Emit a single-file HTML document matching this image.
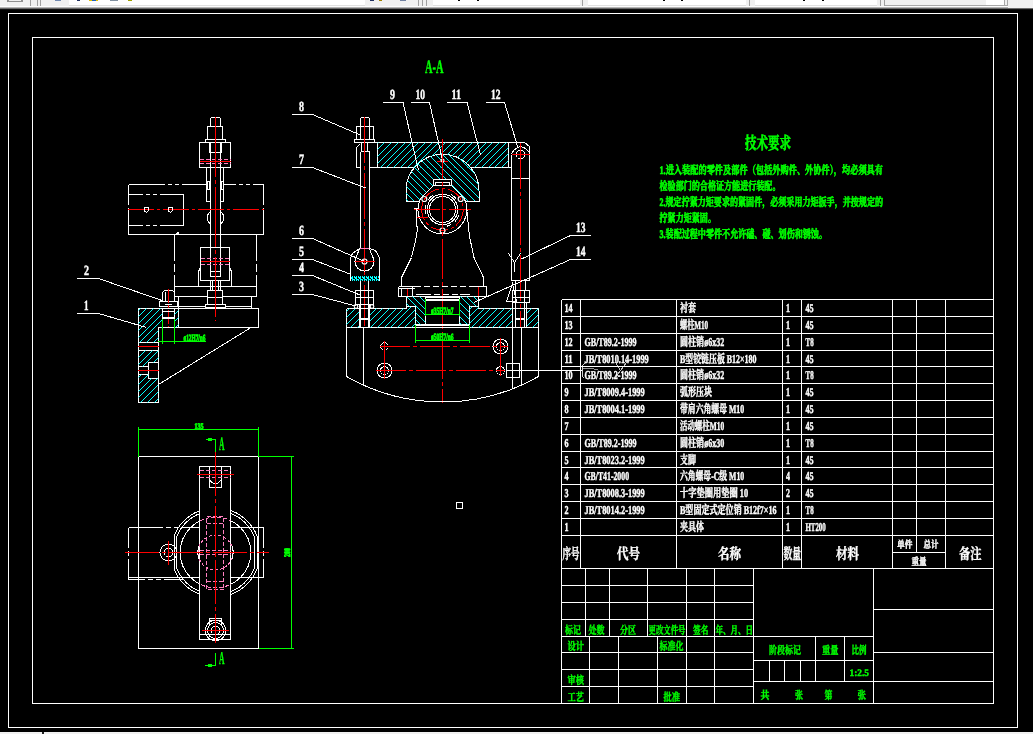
<!DOCTYPE html>
<html lang="zh">
<head>
<meta charset="utf-8">
<title>夹具装配图</title>
<style>
html,body{margin:0;padding:0;background:#000;overflow:hidden}
svg{display:block;position:absolute;left:0;top:0}
text{font-family:"Liberation Serif", "Noto Serif CJK SC", serif;white-space:pre;stroke-width:.45px;text-rendering:geometricPrecision}
</style>
</head>
<body>
<svg width="1033" height="734" viewBox="0 0 1033 734">
<rect x="0" y="0" width="1033" height="734" fill="#000"/>
<g shape-rendering="crispEdges" stroke="none">
<rect x="0" y="0" width="1033" height="8" fill="#f0f0f0"/>
<rect x="0" y="6" width="1008" height="1" fill="#fcfcfc"/>
<rect x="0" y="7" width="1008" height="1" fill="#b4b4b4"/>
<rect x="0" y="8" width="1033" height="1" fill="#6a6a6a"/>
<rect x="0" y="9" width="1033" height="1" fill="#101010"/>
<rect x="69" y="0" width="296" height="5" fill="#fff"/>
<rect x="69" y="5" width="296" height="1" fill="#e0e0e0"/>
<rect x="433" y="0" width="147" height="5" fill="#fff"/>
<rect x="433" y="5" width="147" height="1" fill="#e0e0e0"/>
<rect x="588" y="0" width="158" height="5" fill="#fff"/>
<rect x="588" y="5" width="158" height="1" fill="#e0e0e0"/>
<rect x="755" y="0" width="122" height="5" fill="#fff"/>
<rect x="755" y="5" width="122" height="1" fill="#e0e0e0"/>
<rect x="886" y="0" width="118" height="5" fill="#f0f0f0"/>
<rect x="986" y="0" width="18" height="5" fill="#fff"/>
<rect x="884" y="5" width="124" height="1" fill="#a8a8a8"/>
<rect x="1004" y="0" width="1" height="6" fill="#a8a8a8"/>
<rect x="1007" y="0" width="1" height="6" fill="#a8a8a8"/>
<rect x="30" y="0" width="1" height="6" fill="#a0a0a0"/>
<rect x="37" y="0" width="1" height="6" fill="#a0a0a0"/>
<rect x="40" y="0" width="1" height="6" fill="#a0a0a0"/>
<rect x="418" y="0" width="1" height="6" fill="#a0a0a0"/>
<rect x="422" y="0" width="1" height="6" fill="#a0a0a0"/>
<rect x="426" y="0" width="1" height="6" fill="#a0a0a0"/>
<rect x="582" y="0" width="1" height="6" fill="#a0a0a0"/>
<rect x="749" y="0" width="1" height="6" fill="#a0a0a0"/>
<rect x="880" y="0" width="1" height="6" fill="#a0a0a0"/>
<rect x="884" y="0" width="1" height="6" fill="#a0a0a0"/>
<rect x="7" y="0" width="16" height="2" fill="#909090"/>
<rect x="9" y="0" width="12" height="1" fill="#f0f0f0"/>
<rect x="55" y="0" width="6" height="1" fill="#7088b0"/>
<rect x="77" y="0" width="3" height="1" fill="#203060"/>
<rect x="89" y="0" width="9" height="1" fill="#e0c000"/>
<rect x="92" y="0" width="4" height="1" fill="#2060c0"/>
<rect x="110" y="0" width="8" height="1" fill="#8090a0"/>
<rect x="128" y="0" width="4" height="1" fill="#a0a000"/>
<rect x="370" y="0" width="4" height="1" fill="#203060"/>
<rect x="379" y="0" width="3" height="1" fill="#a08000"/>
<rect x="400" y="0" width="6" height="1" fill="#7080a0"/>
<rect x="458" y="0" width="2" height="1" fill="#000"/>
<rect x="477" y="0" width="2" height="1" fill="#000"/>
<rect x="663" y="0" width="2" height="1" fill="#000"/>
<rect x="681" y="0" width="2" height="1" fill="#000"/>
<rect x="803" y="0" width="2" height="1" fill="#000"/>
<rect x="822" y="0" width="2" height="1" fill="#000"/>
<rect x="0" y="732" width="1033" height="2" fill="#f0f0f0"/>
<rect x="42" y="732" width="2" height="2" fill="#202020"/>
</g>
<defs>
<clipPath id="c1"><path clip-rule="evenodd" d="M138.5,308.5H178.5V327.5H158.5V402.5H138.5Z M162.5,308.5V327.5H174.5V308.5Z M138.5,342.5H158.5V350.5H138.5Z M138.5,366.5H148.5V362.5H158.5V378.5H148.5V374.5H138.5Z"/></clipPath>
<clipPath id="c2"><rect x="100" y="480" width="99.5" height="150"/><rect x="230.5" y="480" width="80" height="150"/></clipPath>
<clipPath id="c3"><rect x="199.5" y="480" width="31" height="150"/></clipPath>
<clipPath id="c4"><path clip-rule="evenodd" d="M377.5,142.5H508.5V167.5H377.5Z M406,190.8 a36.5,36.5 0 1 0 73,0 a36.5,36.5 0 1 0 -73,0Z"/></clipPath>
<clipPath id="c5"><path d="M406,201.5V190.8 A36.5,36.5 0 0 1 479,190.8V201.5Z"/></clipPath>
<clipPath id="c6"><path clip-rule="evenodd" d="M380,130H510V260H380Z M433.5,185.5 L420.7,198.5 A24.4,24.4 0 1 0 464.3,198.5 L451.5,185.5 V179.5 H433.5 Z"/></clipPath>
<clipPath id="c7"><path d="M406.5,296.5H425.5V324.5H415.5V306.5H406.5Z M478.5,296.5H459.5V324.5H469.5V306.5H478.5Z"/></clipPath>
<clipPath id="c8"><path clip-rule="evenodd" d="M346.5,308.5H406.5V306.5H415.5V327.5H346.5Z M359.5,308.5H369.5V327.5H359.5Z M469.5,306.5H478.5V308.5H538.5V327.5H469.5Z M512.5,308.5H526.5V327.5H512.5Z"/></clipPath>
<clipPath id="c9"><rect x="350" y="256" width="30" height="20"/></clipPath>
</defs>
<g shape-rendering="crispEdges" stroke-width="1" fill="none">
<rect x="8.5" y="13.5" width="1009" height="714" stroke="#fff" fill="none"/>
<rect x="32.5" y="37.5" width="961" height="666" stroke="#fff" fill="none"/>
<path d="M210.5,126.5 V118.5 L211.5,117.5 H219.5 L220.5,118.5 V126.5" stroke="#fff" fill="none"/>
<rect x="207.5" y="126.5" width="15" height="13" stroke="#fff" fill="none"/>
<rect x="205.5" y="139.5" width="20" height="3" stroke="#fff" fill="none"/>
<rect x="199.5" y="142.5" width="31" height="25" stroke="#fff" fill="none"/>
<line x1="209.5" y1="142.5" x2="209.5" y2="152.5" stroke="#fff"/>
<line x1="210.5" y1="142.5" x2="210.5" y2="152.5" stroke="#fff"/>
<line x1="220.5" y1="142.5" x2="220.5" y2="152.5" stroke="#fff"/>
<line x1="221.5" y1="142.5" x2="221.5" y2="152.5" stroke="#fff"/>
<line x1="210.5" y1="152.5" x2="220.5" y2="152.5" stroke="#fff"/>
<line x1="210.5" y1="152.5" x2="210.5" y2="276.5" stroke="#fff"/>
<line x1="220.5" y1="152.5" x2="220.5" y2="276.5" stroke="#fff"/>
<line x1="199.5" y1="159.5" x2="231" y2="159.5" stroke="#ff80c0" stroke-dasharray="4 2"/>
<line x1="199.5" y1="163.5" x2="231" y2="163.5" stroke="#ff80c0" stroke-dasharray="4 2"/>
<line x1="199.5" y1="161.5" x2="231" y2="161.5" stroke="#f00"/>
<line x1="206.5" y1="167.5" x2="206.5" y2="201.5" stroke="#fff"/>
<line x1="223.5" y1="167.5" x2="223.5" y2="201.5" stroke="#fff"/>
<line x1="206.5" y1="201.5" x2="210.5" y2="201.5" stroke="#fff"/>
<line x1="220.5" y1="201.5" x2="223.5" y2="201.5" stroke="#fff"/>
<rect x="207.5" y="181.5" width="2" height="8" stroke="#fff" fill="none"/>
<rect x="221.5" y="181.5" width="2" height="8" stroke="#fff" fill="none"/>
<line x1="128.5" y1="184.5" x2="206.5" y2="184.5" stroke="#fff" stroke-dasharray="36 3 4 3 4 3 100"/>
<line x1="223.5" y1="184.5" x2="263.5" y2="184.5" stroke="#fff" stroke-dasharray="12 3 4 3 4 3 100"/>
<line x1="128.5" y1="234.5" x2="263.5" y2="234.5" stroke="#fff"/>
<line x1="128.5" y1="184.5" x2="128.5" y2="234.5" stroke="#fff" stroke-dasharray="20 3 100"/>
<line x1="263.5" y1="184.5" x2="263.5" y2="234.5" stroke="#fff" stroke-dasharray="20 3 100"/>
<line x1="128.5" y1="194.5" x2="183.5" y2="194.5" stroke="#fff" stroke-dasharray="14 3 4 3 4 3 100"/>
<line x1="128.5" y1="225.5" x2="183.5" y2="225.5" stroke="#fff" stroke-dasharray="14 3 4 3 4 3 100"/>
<line x1="183.5" y1="194.5" x2="183.5" y2="225.5" stroke="#fff"/>
<line x1="128" y1="209.5" x2="264" y2="209.5" stroke="#f00" stroke-dasharray="26 3 3 3"/>
<polygon points="144,207.5 148.5,207.5 148.5,210.5 146.5,212.5 144,210.5" stroke="#fff" fill="none"/>
<polygon points="168,207.5 172.5,207.5 172.5,210.5 170.5,212.5 168,210.5" stroke="#fff" fill="none"/>
<path d="M210.5,211.5 Q203.5,217.5 210.5,224.5" stroke="#fff" fill="none"/>
<path d="M220.5,211.5 Q227.5,217.5 220.5,224.5" stroke="#fff" fill="none"/>
<line x1="174.5" y1="234.5" x2="174.5" y2="286.5" stroke="#fff" stroke-dasharray="26 3 8 3 100"/>
<line x1="256.5" y1="234.5" x2="256.5" y2="296.5" stroke="#fff" stroke-dasharray="26 3 8 3 100"/>
<polyline points="176.5,234.5 178,232 179.5,234.5" stroke="#fff" fill="none"/>
<rect x="200.5" y="247.5" width="29" height="33" stroke="#fff" fill="none"/>
<line x1="200.5" y1="258.5" x2="230" y2="258.5" stroke="#ff80c0" stroke-dasharray="4 2"/>
<line x1="200.5" y1="264.5" x2="230" y2="264.5" stroke="#ff80c0" stroke-dasharray="4 2"/>
<line x1="200.5" y1="261.5" x2="230" y2="261.5" stroke="#f00"/>
<line x1="210.5" y1="271.5" x2="220.5" y2="271.5" stroke="#fff"/>
<line x1="210.5" y1="276.5" x2="220.5" y2="276.5" stroke="#fff"/>
<polyline points="200.5,267.5 198.5,271.5 198.5,285.5" stroke="#fff" fill="none"/>
<polyline points="229.5,267.5 231.5,271.5 231.5,285.5" stroke="#fff" fill="none"/>
<rect x="174.5" y="286.5" width="82" height="10" stroke="#fff" fill="none"/>
<line x1="210.5" y1="280.5" x2="210.5" y2="290.5" stroke="#fff"/>
<line x1="220.5" y1="280.5" x2="220.5" y2="290.5" stroke="#fff"/>
<line x1="212.5" y1="280.5" x2="212.5" y2="290.5" stroke="#fff"/>
<line x1="218.5" y1="280.5" x2="218.5" y2="290.5" stroke="#fff"/>
<rect x="207.5" y="290.5" width="15" height="14" stroke="#fff" fill="#000"/>
<line x1="207.5" y1="297.5" x2="222.5" y2="297.5" stroke="#fff"/>
<rect x="205.5" y="304.5" width="20" height="3" stroke="#fff" fill="#000"/>
<line x1="178.5" y1="296.5" x2="178.5" y2="308.5" stroke="#fff"/>
<line x1="251.5" y1="296.5" x2="251.5" y2="308.5" stroke="#fff"/>
<line x1="178.5" y1="306.5" x2="205.5" y2="306.5" stroke="#fff"/>
<line x1="225.5" y1="306.5" x2="251.5" y2="306.5" stroke="#fff"/>
<line x1="138.5" y1="308.5" x2="258.5" y2="308.5" stroke="#fff"/>
<line x1="258.5" y1="308.5" x2="258.5" y2="327.5" stroke="#fff"/>
<line x1="158.5" y1="327.5" x2="258.5" y2="327.5" stroke="#fff"/>
<line x1="215.5" y1="117" x2="215.5" y2="321" stroke="#f00" stroke-dasharray="60 3 4 3"/>
<path d="M162.5,301.5 V293.5 Q162.5,290.5 165.5,290.5 H171.5 Q174.5,290.5 174.5,293.5 V301.5" stroke="#fff" fill="none"/>
<line x1="165.5" y1="291.5" x2="165.5" y2="301.5" stroke="#fff"/>
<rect x="159.5" y="301.5" width="18" height="5" stroke="#fff" fill="none"/>
<line x1="165" y1="304.5" x2="172" y2="304.5" stroke="#fff"/>
<line x1="168.5" y1="289" x2="168.5" y2="327" stroke="#f00" stroke-dasharray="14 2 3 2"/>
<polygon points="138.5,308.5 178.5,308.5 178.5,327.5 158.5,327.5 158.5,402.5 138.5,402.5" stroke="#fff" fill="none"/>
<line x1="162.5" y1="308.5" x2="162.5" y2="327.5" stroke="#fff"/>
<line x1="174.5" y1="308.5" x2="174.5" y2="327.5" stroke="#fff"/>
<line x1="162.5" y1="317.5" x2="174.5" y2="317.5" stroke="#fff"/>
<line x1="162.5" y1="318.5" x2="174.5" y2="318.5" stroke="#fff"/>
<line x1="162.5" y1="311.5" x2="174.5" y2="311.5" stroke="#fff"/>
<line x1="138.5" y1="342.5" x2="158.5" y2="342.5" stroke="#fff"/>
<line x1="138.5" y1="350.5" x2="158.5" y2="350.5" stroke="#fff"/>
<line x1="138" y1="346.5" x2="159" y2="346.5" stroke="#f00"/>
<line x1="138.5" y1="366.5" x2="148.5" y2="366.5" stroke="#fff"/>
<line x1="138.5" y1="374.5" x2="148.5" y2="374.5" stroke="#fff"/>
<rect x="148.5" y="362.5" width="10" height="16" stroke="#fff" fill="none"/>
<line x1="138" y1="370.5" x2="159" y2="370.5" stroke="#f00"/>
<path clip-path="url(#c1)" d="M38.5,403.5 L133.5,308.5 M45.5,403.5 L140.5,308.5 M51.5,403.5 L146.5,308.5 M58.5,403.5 L153.5,308.5 M65.5,403.5 L160.5,308.5 M72.5,403.5 L167.5,308.5 M78.5,403.5 L173.5,308.5 M85.5,403.5 L180.5,308.5 M92.5,403.5 L187.5,308.5 M99.5,403.5 L194.5,308.5 M105.5,403.5 L200.5,308.5 M112.5,403.5 L207.5,308.5 M119.5,403.5 L214.5,308.5 M126.5,403.5 L221.5,308.5 M132.5,403.5 L227.5,308.5 M139.5,403.5 L234.5,308.5 M146.5,403.5 L241.5,308.5 M153.5,403.5 L248.5,308.5 M159.5,403.5 L254.5,308.5 M166.5,403.5 L261.5,308.5 M173.5,403.5 L268.5,308.5 M180.5,403.5 L275.5,308.5 M186.5,403.5 L281.5,308.5 M193.5,403.5 L288.5,308.5 M200.5,403.5 L295.5,308.5 M207.5,403.5 L302.5,308.5 M213.5,403.5 L308.5,308.5 M220.5,403.5 L315.5,308.5 M227.5,403.5 L322.5,308.5 M234.5,403.5 L329.5,308.5 M240.5,403.5 L335.5,308.5 M247.5,403.5 L342.5,308.5 M254.5,403.5 L349.5,308.5 M261.5,403.5 L356.5,308.5 M267.5,403.5 L362.5,308.5 M274.5,403.5 L369.5,308.5" stroke="#0ff" fill="none"/>
<line x1="251" y1="327.5" x2="158.5" y2="384.5" stroke="#fff"/>
<line x1="162.5" y1="318.5" x2="162.5" y2="343.5" stroke="#0f0"/>
<line x1="174.5" y1="318.5" x2="174.5" y2="343.5" stroke="#0f0"/>
<line x1="158" y1="341.5" x2="206" y2="341.5" stroke="#0f0"/>
<polyline points="77,278.5 98.5,278.5 162,300.5" stroke="#fff" fill="none"/>
<polyline points="77,313.5 98.5,313.5 146.5,327.5" stroke="#fff" fill="none"/>
<rect x="138.5" y="456.5" width="120" height="192" stroke="#fff" fill="none"/>
<line x1="138.5" y1="429.5" x2="258.5" y2="429.5" stroke="#0f0"/>
<line x1="138.5" y1="427" x2="138.5" y2="456.5" stroke="#0f0"/>
<line x1="258.5" y1="427" x2="258.5" y2="456.5" stroke="#0f0"/>
<line x1="258.5" y1="456.5" x2="294" y2="456.5" stroke="#0f0"/>
<line x1="258.5" y1="648.5" x2="294" y2="648.5" stroke="#0f0"/>
<line x1="291.5" y1="456.5" x2="291.5" y2="648.5" stroke="#0f0"/>
<line x1="215.5" y1="439.5" x2="215.5" y2="452" stroke="#0f0"/>
<line x1="205.5" y1="439.5" x2="215.5" y2="439.5" stroke="#0f0"/>
<rect x="208" y="438" width="4" height="3" fill="#0f0" stroke="none"/>
<line x1="215.5" y1="653" x2="215.5" y2="665.5" stroke="#0f0"/>
<line x1="205" y1="665.5" x2="215.5" y2="665.5" stroke="#0f0"/>
<rect x="208" y="664" width="4" height="3" fill="#0f0" stroke="none"/>
<rect x="199.5" y="466.5" width="31" height="173" stroke="#fff" fill="none"/>
<line x1="199.5" y1="634.5" x2="230.5" y2="634.5" stroke="#fff"/>
<path d="M209.5,466.5 V487.5 H221.5 V466.5" stroke="#fff" fill="none"/>
<path d="M209.5,477.5 A6,6 0 0 0 221.5,477.5" stroke="#fff" fill="none"/>
<line x1="199.5" y1="470.5" x2="231" y2="470.5" stroke="#ff80c0" stroke-dasharray="4 2"/>
<line x1="199.5" y1="477.5" x2="231" y2="477.5" stroke="#ff80c0" stroke-dasharray="4 2"/>
<line x1="197" y1="474.5" x2="234" y2="474.5" stroke="#f00"/>
<line x1="128.5" y1="527.5" x2="199.5" y2="527.5" stroke="#fff" stroke-dasharray="34 3 5 3 5 3 100"/>
<line x1="230.5" y1="527.5" x2="263.5" y2="527.5" stroke="#fff"/>
<line x1="128.5" y1="577.5" x2="199.5" y2="577.5" stroke="#fff"/>
<line x1="230.5" y1="577.5" x2="263.5" y2="577.5" stroke="#fff"/>
<line x1="128.5" y1="579.5" x2="184" y2="579.5" stroke="#fff" stroke-dasharray="16 3 5 3 5 3 100"/>
<line x1="128.5" y1="527.5" x2="128.5" y2="579.5" stroke="#fff" stroke-dasharray="20 3 5 3 100"/>
<line x1="263.5" y1="527.5" x2="263.5" y2="577.5" stroke="#fff" stroke-dasharray="20 3 5 3 100"/>
<path d="M215.5,507.8 A44.7,44.7 0 0 1 257,535.89 V569.11 A44.7,44.7 0 0 1 215.5,597.2 A44.7,44.7 0 0 1 174,569.11 V535.89 A44.7,44.7 0 0 1 215.5,507.8" stroke="#fff" fill="none" clip-path="url(#c2)"/>
<path d="M215.5,510.5 A42,42 0 0 1 254.5,536.91 V568.09 A42,42 0 0 1 215.5,594.5 A42,42 0 0 1 176.5,568.09 V536.91 A42,42 0 0 1 215.5,510.5" stroke="#fff" fill="none" clip-path="url(#c2)"/>
<circle cx="215.5" cy="552.5" r="35.3" stroke="#fff" fill="none" clip-path="url(#c2)"/>
<circle cx="215.5" cy="552.5" r="35.3" stroke="#ff80c0" fill="none" stroke-dasharray="4 2" clip-path="url(#c3)"/>
<rect x="206.5" y="516.5" width="17" height="73" stroke="#ff80c0" fill="none" stroke-dasharray="4 2"/>
<line x1="206.5" y1="523.5" x2="223.5" y2="523.5" stroke="#ff80c0" stroke-dasharray="4 2"/>
<line x1="206.5" y1="581.5" x2="223.5" y2="581.5" stroke="#ff80c0" stroke-dasharray="4 2"/>
<circle cx="215.5" cy="552.5" r="17.5" stroke="#ff80c0" fill="none" stroke-dasharray="3 2"/>
<line x1="199.5" y1="550.5" x2="231" y2="550.5" stroke="#ff80c0" stroke-dasharray="4 2"/>
<line x1="199.5" y1="554.5" x2="231" y2="554.5" stroke="#ff80c0" stroke-dasharray="4 2"/>
<path d="M198.5,546 Q197,552.5 198.5,559" stroke="#fff" fill="none"/>
<path d="M232.5,546 Q234,552.5 232.5,559" stroke="#fff" fill="none"/>
<circle cx="168.5" cy="552.5" r="8.5" stroke="#fff" fill="none"/>
<circle cx="168.5" cy="552.5" r="4.5" stroke="#fff" fill="none"/>
<line x1="168.5" y1="541" x2="168.5" y2="565" stroke="#f00"/>
<circle cx="215.5" cy="630.5" r="10.2" stroke="#fff" fill="none"/>
<circle cx="215.5" cy="630.5" r="8" stroke="#fff" fill="none"/>
<circle cx="215.5" cy="630.5" r="4.5" stroke="#fff" fill="none"/>
<path d="M209.5,624 V618.5 H221.5 V624" stroke="#fff" fill="none"/>
<line x1="209.5" y1="620.5" x2="221.5" y2="620.5" stroke="#fff"/>
<line x1="202" y1="630.5" x2="229" y2="630.5" stroke="#f00"/>
<line x1="215.5" y1="452" x2="215.5" y2="643" stroke="#f00" stroke-dasharray="44 3 4 3"/>
<line x1="125" y1="552.5" x2="269" y2="552.5" stroke="#f00" stroke-dasharray="34 3 4 3"/>
<path d="M360.5,126.5 V118.5 L361.5,117.5 H368.5 L369.5,118.5 V126.5" stroke="#fff" fill="none"/>
<rect x="356.5" y="126.5" width="17" height="13" stroke="#fff" fill="none"/>
<line x1="360.5" y1="126.5" x2="360.5" y2="139.5" stroke="#fff"/>
<line x1="369.5" y1="126.5" x2="369.5" y2="139.5" stroke="#fff"/>
<rect x="354.5" y="139.5" width="20" height="3" stroke="#fff" fill="none"/>
<line x1="361.5" y1="142.5" x2="361.5" y2="151.5" stroke="#fff"/>
<line x1="367.5" y1="142.5" x2="367.5" y2="151.5" stroke="#fff"/>
<line x1="360.5" y1="151.5" x2="369.5" y2="151.5" stroke="#fff"/>
<line x1="360.5" y1="151.5" x2="360.5" y2="248.5" stroke="#fff"/>
<line x1="369.5" y1="151.5" x2="369.5" y2="248.5" stroke="#fff"/>
<polyline points="359.5,144.5 356.5,147.5 356.5,167.5 360.5,167.5" stroke="#fff" fill="none"/>
<line x1="364.5" y1="117" x2="364.5" y2="326" stroke="#f00" stroke-dasharray="46 3 4 3"/>
<polyline points="374.5,142.5 524.5,142.5 529.5,146.5 529.5,280.5" stroke="#fff" fill="none"/>
<line x1="377.5" y1="142.5" x2="377.5" y2="167.5" stroke="#fff"/>
<line x1="508.5" y1="142.5" x2="508.5" y2="167.5" stroke="#fff"/>
<line x1="369.5" y1="167.5" x2="414.4" y2="167.5" stroke="#fff"/>
<line x1="470.6" y1="167.5" x2="511.5" y2="167.5" stroke="#fff"/>
<path d="M406,201.5 V190.8 A36.5,36.5 0 0 1 479,190.8 V201.5" stroke="#fff" fill="none"/>
<line x1="406" y1="201.5" x2="419.5" y2="201.5" stroke="#fff"/>
<line x1="465.5" y1="201.5" x2="479" y2="201.5" stroke="#fff"/>
<path clip-path="url(#c4)" d="M345.5,168.5 L371.5,142.5 M352.5,168.5 L378.5,142.5 M358.5,168.5 L384.5,142.5 M365.5,168.5 L391.5,142.5 M372.5,168.5 L398.5,142.5 M379.5,168.5 L405.5,142.5 M385.5,168.5 L411.5,142.5 M392.5,168.5 L418.5,142.5 M399.5,168.5 L425.5,142.5 M406.5,168.5 L432.5,142.5 M412.5,168.5 L438.5,142.5 M419.5,168.5 L445.5,142.5 M426.5,168.5 L452.5,142.5 M433.5,168.5 L459.5,142.5 M439.5,168.5 L465.5,142.5 M446.5,168.5 L472.5,142.5 M453.5,168.5 L479.5,142.5 M460.5,168.5 L486.5,142.5 M466.5,168.5 L492.5,142.5 M473.5,168.5 L499.5,142.5 M480.5,168.5 L506.5,142.5 M487.5,168.5 L513.5,142.5 M493.5,168.5 L519.5,142.5 M500.5,168.5 L526.5,142.5 M507.5,168.5 L533.5,142.5 M514.5,168.5 L540.5,142.5 M520.5,168.5 L546.5,142.5 M527.5,168.5 L553.5,142.5 M534.5,168.5 L560.5,142.5 M541.5,168.5 L567.5,142.5" stroke="#0ff" fill="none"/>
<g clip-path="url(#c5)"><path clip-path="url(#c6)" d="M353.5,153.5 L401.5,201.5 M360.5,153.5 L408.5,201.5 M366.5,153.5 L414.5,201.5 M373.5,153.5 L421.5,201.5 M380.5,153.5 L428.5,201.5 M387.5,153.5 L435.5,201.5 M393.5,153.5 L441.5,201.5 M400.5,153.5 L448.5,201.5 M407.5,153.5 L455.5,201.5 M414.5,153.5 L462.5,201.5 M420.5,153.5 L468.5,201.5 M427.5,153.5 L475.5,201.5 M434.5,153.5 L482.5,201.5 M441.5,153.5 L489.5,201.5 M447.5,153.5 L495.5,201.5 M454.5,153.5 L502.5,201.5 M461.5,153.5 L509.5,201.5 M468.5,153.5 L516.5,201.5 M474.5,153.5 L522.5,201.5 M481.5,153.5 L529.5,201.5 M488.5,153.5 L536.5,201.5 M495.5,153.5 L543.5,201.5 M501.5,153.5 L549.5,201.5 M508.5,153.5 L556.5,201.5 M515.5,153.5 L563.5,201.5 M522.5,153.5 L570.5,201.5 M528.5,153.5 L576.5,201.5" stroke="#0ff" fill="none"/></g>
<path d="M433.5,185.5 L420.7,198.5 A24.4,24.4 0 1 0 464.3,198.5 L451.5,185.5 V179.5 H433.5 Z" stroke="#fff" fill="none"/>
<polyline points="435.5,185.5 435.5,182.5 449.5,182.5 449.5,185.5" stroke="#fff" fill="none"/>
<line x1="433.5" y1="185.5" x2="451.5" y2="185.5" stroke="#fff"/>
<circle cx="442.5" cy="209.5" r="20.8" stroke="#f00" fill="none" stroke-dasharray="18 3 3 3" transform="rotate(-150 442.5 209.5)"/>
<circle cx="442.5" cy="209.5" r="15.3" stroke="#fff" fill="none"/>
<circle cx="442.5" cy="209.5" r="13.1" stroke="#fff" fill="none"/>
<path d="M425.79,213.98 A17.3,17.3 0 0 1 425.79,205.02" stroke="#fff" fill="none"/>
<path d="M458.76,215.42 A17.3,17.3 0 0 1 454.73,221.73" stroke="#fff" fill="none"/>
<path d="M451.15,224.48 A17.3,17.3 0 0 1 446.98,226.21" stroke="#fff" fill="none"/>
<path d="M428.33,199.58 A17.3,17.3 0 0 1 432.58,195.33" stroke="#fff" fill="none"/>
<path d="M451.15,194.52 A17.3,17.3 0 0 1 455.75,198.38" stroke="#fff" fill="none"/>
<circle cx="424.31" cy="199" r="2.5" stroke="#fff" fill="none" shape-rendering="geometricPrecision" stroke-width="1.2"/>
<circle cx="460.69" cy="199" r="2.5" stroke="#fff" fill="none" shape-rendering="geometricPrecision" stroke-width="1.2"/>
<circle cx="442.5" cy="230.5" r="2.5" stroke="#fff" fill="none" shape-rendering="geometricPrecision" stroke-width="1.2"/>
<line x1="414" y1="209.5" x2="471" y2="209.5" stroke="#f00" stroke-dasharray="26 3 3 3"/>
<line x1="416" y1="217.5" x2="427.5" y2="217.5" stroke="#f00"/>
<line x1="437" y1="161.5" x2="448" y2="161.5" stroke="#f00"/>
<circle cx="442.5" cy="160.5" r="1.5" stroke="#fff" fill="none" shape-rendering="geometricPrecision" stroke-width="1.2"/>
<line x1="442.5" y1="139" x2="442.5" y2="402.5" stroke="#f00" stroke-dasharray="40 3 4 3"/>
<line x1="414" y1="208.5" x2="418" y2="208.5" stroke="#fff"/>
<path d="M416.5,208.5 V226.5 H418 L416,238.5 L411.5,257.5 L401.5,277.5 V286.5" stroke="#fff" fill="none"/>
<path d="M466.5,206.5 L467.5,216.5 L469.5,236.5 L474,257.5 L483.5,277.5 V286.5" stroke="#fff" fill="none"/>
<line x1="398.5" y1="286.5" x2="414.5" y2="286.5" stroke="#fff"/>
<line x1="398.5" y1="286.5" x2="398.5" y2="296.5" stroke="#fff"/>
<line x1="398.5" y1="288.5" x2="414.5" y2="288.5" stroke="#fff"/>
<line x1="412.5" y1="286.5" x2="412.5" y2="296.5" stroke="#fff"/>
<line x1="401.5" y1="288.5" x2="401.5" y2="296.5" stroke="#fff"/>
<line x1="398.5" y1="296.5" x2="412.5" y2="296.5" stroke="#fff"/>
<line x1="414.5" y1="286.5" x2="470" y2="286.5" stroke="#fff" stroke-dasharray="6 3"/>
<line x1="470" y1="286.5" x2="486.5" y2="286.5" stroke="#fff"/>
<line x1="486.5" y1="286.5" x2="486.5" y2="296.5" stroke="#fff"/>
<line x1="478.5" y1="296.5" x2="486.5" y2="296.5" stroke="#fff"/>
<line x1="415.5" y1="294.5" x2="470" y2="294.5" stroke="#fff" stroke-dasharray="6 3"/>
<line x1="407.5" y1="288.5" x2="407.5" y2="296.5" stroke="#f00"/>
<line x1="478.5" y1="286.5" x2="478.5" y2="296.5" stroke="#f00"/>
<polyline points="406.5,308.5 406.5,296.5 425.5,296.5 425.5,324.5" stroke="#fff" fill="none"/>
<polyline points="406.5,306.5 415.5,306.5 415.5,327.5" stroke="#fff" fill="none"/>
<polyline points="478.5,308.5 478.5,296.5 459.5,296.5 459.5,324.5" stroke="#fff" fill="none"/>
<polyline points="478.5,306.5 469.5,306.5 469.5,327.5" stroke="#fff" fill="none"/>
<line x1="415.5" y1="324.5" x2="469.5" y2="324.5" stroke="#fff"/>
<line x1="415.5" y1="325.5" x2="469.5" y2="325.5" stroke="#fff"/>
<line x1="425.5" y1="296.5" x2="459.5" y2="296.5" stroke="#fff"/>
<line x1="425.5" y1="297.5" x2="459.5" y2="297.5" stroke="#fff"/>
<line x1="425.5" y1="299.5" x2="459.5" y2="299.5" stroke="#fff"/>
<line x1="425.5" y1="300.5" x2="459.5" y2="300.5" stroke="#fff"/>
<line x1="415.5" y1="294.5" x2="425.5" y2="294.5" stroke="#fff"/>
<line x1="459.5" y1="294.5" x2="469.5" y2="294.5" stroke="#fff"/>
<path clip-path="url(#c7)" d="M372.5,296.5 L401.5,325.5 M379.5,296.5 L408.5,325.5 M385.5,296.5 L414.5,325.5 M392.5,296.5 L421.5,325.5 M399.5,296.5 L428.5,325.5 M406.5,296.5 L435.5,325.5 M412.5,296.5 L441.5,325.5 M419.5,296.5 L448.5,325.5 M426.5,296.5 L455.5,325.5 M433.5,296.5 L462.5,325.5 M439.5,296.5 L468.5,325.5 M446.5,296.5 L475.5,325.5 M453.5,296.5 L482.5,325.5 M460.5,296.5 L489.5,325.5 M466.5,296.5 L495.5,325.5 M473.5,296.5 L502.5,325.5 M480.5,296.5 L509.5,325.5 M487.5,296.5 L516.5,325.5 M493.5,296.5 L522.5,325.5 M500.5,296.5 L529.5,325.5 M507.5,296.5 L536.5,325.5 M514.5,296.5 L543.5,325.5" stroke="#0ff" fill="none"/>
<line x1="346.5" y1="308.5" x2="406.5" y2="308.5" stroke="#fff"/>
<line x1="478.5" y1="308.5" x2="538.5" y2="308.5" stroke="#fff"/>
<line x1="346.5" y1="327.5" x2="538.5" y2="327.5" stroke="#fff"/>
<line x1="346.5" y1="308.5" x2="346.5" y2="376.5" stroke="#fff"/>
<line x1="538.5" y1="308.5" x2="538.5" y2="376.5" stroke="#fff"/>
<path clip-path="url(#c8)" d="M322.5,328.5 L343.5,307.5 M329.5,328.5 L350.5,307.5 M335.5,328.5 L356.5,307.5 M342.5,328.5 L363.5,307.5 M349.5,328.5 L370.5,307.5 M356.5,328.5 L377.5,307.5 M362.5,328.5 L383.5,307.5 M369.5,328.5 L390.5,307.5 M376.5,328.5 L397.5,307.5 M383.5,328.5 L404.5,307.5 M389.5,328.5 L410.5,307.5 M396.5,328.5 L417.5,307.5 M403.5,328.5 L424.5,307.5 M410.5,328.5 L431.5,307.5 M416.5,328.5 L437.5,307.5 M423.5,328.5 L444.5,307.5 M430.5,328.5 L451.5,307.5 M437.5,328.5 L458.5,307.5 M443.5,328.5 L464.5,307.5 M450.5,328.5 L471.5,307.5 M457.5,328.5 L478.5,307.5 M464.5,328.5 L485.5,307.5 M470.5,328.5 L491.5,307.5 M477.5,328.5 L498.5,307.5 M484.5,328.5 L505.5,307.5 M491.5,328.5 L512.5,307.5 M497.5,328.5 L518.5,307.5 M504.5,328.5 L525.5,307.5 M511.5,328.5 L532.5,307.5 M518.5,328.5 L539.5,307.5 M524.5,328.5 L545.5,307.5 M531.5,328.5 L552.5,307.5 M538.5,328.5 L559.5,307.5 M545.5,328.5 L566.5,307.5 M551.5,328.5 L572.5,307.5 M558.5,328.5 L579.5,307.5 M565.5,328.5 L586.5,307.5" stroke="#0ff" fill="none"/>
<line x1="359.5" y1="304.5" x2="359.5" y2="327.5" stroke="#fff"/>
<line x1="369.5" y1="304.5" x2="369.5" y2="327.5" stroke="#fff"/>
<line x1="360.5" y1="304.5" x2="360.5" y2="327.5" stroke="#fff"/>
<line x1="368.5" y1="304.5" x2="368.5" y2="327.5" stroke="#fff"/>
<line x1="360.5" y1="319.5" x2="368.5" y2="319.5" stroke="#fff"/>
<line x1="360.5" y1="318.5" x2="368.5" y2="318.5" stroke="#fff"/>
<line x1="512.5" y1="301.5" x2="512.5" y2="327.5" stroke="#fff"/>
<line x1="526.5" y1="301.5" x2="526.5" y2="327.5" stroke="#fff"/>
<line x1="515.5" y1="301.5" x2="515.5" y2="327.5" stroke="#fff"/>
<line x1="524.5" y1="301.5" x2="524.5" y2="327.5" stroke="#fff"/>
<line x1="515.5" y1="318.5" x2="524.5" y2="318.5" stroke="#fff"/>
<line x1="515.5" y1="319.5" x2="524.5" y2="319.5" stroke="#fff"/>
<path d="M346.5,376.5 A193.5,193.5 0 0 0 538.5,376.5" stroke="#fff" fill="none"/>
<line x1="363.5" y1="327.5" x2="363.5" y2="385.14" stroke="#fff"/>
<line x1="512.5" y1="327.5" x2="512.5" y2="388.89" stroke="#fff"/>
<line x1="521.5" y1="327.5" x2="521.5" y2="385.14" stroke="#fff"/>
<circle cx="384.5" cy="346.5" r="3.7" stroke="#fff" fill="none"/>
<circle cx="500.5" cy="346.5" r="7.5" stroke="#fff" fill="none"/>
<circle cx="500.5" cy="346.5" r="4" stroke="#fff" fill="none"/>
<circle cx="384.5" cy="370.5" r="7.5" stroke="#fff" fill="none"/>
<circle cx="384.5" cy="370.5" r="4" stroke="#fff" fill="none"/>
<circle cx="500.5" cy="370.5" r="4" stroke="#fff" fill="none"/>
<line x1="380" y1="346.5" x2="508" y2="346.5" stroke="#f00" stroke-dasharray="30 3 4 3"/>
<line x1="376" y1="370.5" x2="505" y2="370.5" stroke="#f00" stroke-dasharray="30 3 4 3"/>
<line x1="384.5" y1="341" x2="384.5" y2="379" stroke="#f00"/>
<line x1="500.5" y1="338" x2="500.5" y2="376" stroke="#f00"/>
<line x1="425.5" y1="299" x2="425.5" y2="316" stroke="#0f0"/>
<line x1="459.5" y1="299" x2="459.5" y2="316" stroke="#0f0"/>
<line x1="425.5" y1="314.5" x2="459.5" y2="314.5" stroke="#0f0"/>
<line x1="415.5" y1="325" x2="415.5" y2="343" stroke="#0f0"/>
<line x1="469.5" y1="325" x2="469.5" y2="343" stroke="#0f0"/>
<line x1="415.5" y1="340.5" x2="469.5" y2="340.5" stroke="#0f0"/>
<path d="M350.5,276.5 V258 L352.5,253.5 L359.5,248.5" stroke="#fff" fill="none"/>
<path d="M369.5,248.5 L375.5,250.5 L379.5,258 V276.5" stroke="#fff" fill="none"/>
<line x1="360" y1="248.5" x2="369.5" y2="248.5" stroke="#ff80c0"/>
<circle cx="364.5" cy="261.5" r="9.5" stroke="#fff" fill="none" clip-path="url(#c9)"/>
<path d="M359.5,248.5 L357.5,254 L355.5,259" stroke="#fff" fill="none"/>
<path d="M369.5,248.5 L371.5,254 L373.5,259" stroke="#fff" fill="none"/>
<circle cx="364.5" cy="261.5" r="2.5" stroke="#fff" fill="none" shape-rendering="geometricPrecision" stroke-width="1.2"/>
<line x1="355" y1="261.5" x2="375" y2="261.5" stroke="#f00"/>
<line x1="350" y1="276.5" x2="380" y2="276.5" stroke="#0ff" stroke-dasharray="1 1"/>
<line x1="350" y1="277.5" x2="380" y2="277.5" stroke="#0ff" stroke-dasharray="3 1"/>
<line x1="351" y1="278.5" x2="380" y2="278.5" stroke="#0ff" stroke-dasharray="2 2"/>
<line x1="352" y1="279.5" x2="380" y2="279.5" stroke="#0ff" stroke-dasharray="3 1"/>
<line x1="350" y1="280.5" x2="380" y2="280.5" stroke="#0ff" stroke-dasharray="1 1"/>
<line x1="350.5" y1="276" x2="350.5" y2="281" stroke="#fff"/>
<line x1="379.5" y1="276" x2="379.5" y2="281" stroke="#fff"/>
<line x1="360.5" y1="280.5" x2="360.5" y2="290.5" stroke="#fff"/>
<line x1="368.5" y1="280.5" x2="368.5" y2="290.5" stroke="#fff"/>
<rect x="355.5" y="290.5" width="18" height="14" stroke="#fff" fill="none"/>
<line x1="355.5" y1="297.5" x2="373.5" y2="297.5" stroke="#fff"/>
<line x1="360.5" y1="290.5" x2="360.5" y2="304.5" stroke="#fff"/>
<line x1="368.5" y1="290.5" x2="368.5" y2="304.5" stroke="#fff"/>
<circle cx="356" cy="306.5" r="1.8" stroke="#fff" fill="none" shape-rendering="geometricPrecision" stroke-width="1.2"/>
<circle cx="372" cy="306.5" r="1.8" stroke="#fff" fill="none" shape-rendering="geometricPrecision" stroke-width="1.2"/>
<line x1="511.5" y1="154.5" x2="511.5" y2="280.5" stroke="#fff"/>
<line x1="508.5" y1="167.5" x2="511.5" y2="167.5" stroke="#fff"/>
<path d="M511.5,154.5 Q513,149 520.5,146.5 Q527,148 529.5,153" stroke="#fff" fill="none"/>
<circle cx="520.5" cy="154.5" r="4.5" stroke="#fff" fill="none"/>
<line x1="511.5" y1="154.5" x2="529.5" y2="154.5" stroke="#f00"/>
<line x1="511.5" y1="178.5" x2="529.5" y2="178.5" stroke="#fff"/>
<line x1="511.5" y1="280.5" x2="529.5" y2="280.5" stroke="#fff"/>
<line x1="520.5" y1="143" x2="520.5" y2="327" stroke="#f00" stroke-dasharray="46 3 4 3"/>
<polyline points="508.5,253.5 514.5,262.5 520.5,253.5" stroke="#fff" fill="none"/>
<line x1="514.5" y1="262.5" x2="514.5" y2="271.5" stroke="#fff"/>
<line x1="515.5" y1="280.5" x2="515.5" y2="290.5" stroke="#fff"/>
<line x1="525.5" y1="280.5" x2="525.5" y2="290.5" stroke="#fff"/>
<rect x="512.5" y="290.5" width="17" height="12" stroke="#fff" fill="none"/>
<line x1="512.5" y1="297.5" x2="529.5" y2="297.5" stroke="#fff"/>
<line x1="515.5" y1="290.5" x2="515.5" y2="301.5" stroke="#fff"/>
<line x1="524.5" y1="290.5" x2="524.5" y2="301.5" stroke="#fff"/>
<polygon points="512.5,283.5 506.5,301.5 516.5,301.5" stroke="#fff" fill="none"/>
<polyline points="292,114.5 312.5,114.5 361.5,135.5" stroke="#fff" fill="none"/>
<polyline points="292,167.5 312.5,167.5 365.5,188" stroke="#fff" fill="none"/>
<polyline points="292,238.5 312.5,238.5 363.5,261" stroke="#fff" fill="none"/>
<polyline points="292,259.5 312.5,259.5 351,274.5" stroke="#fff" fill="none"/>
<polyline points="292,275.5 312.5,275.5 360,295" stroke="#fff" fill="none"/>
<polyline points="292,294.5 312.5,294.5 355.5,306" stroke="#fff" fill="none"/>
<polyline points="382.5,102.5 403,102.5 418.5,170.5" stroke="#fff" fill="none"/>
<polyline points="410.5,102.5 429.5,102.5 442,158" stroke="#fff" fill="none"/>
<polyline points="446.5,102.5 467,102.5 480.5,155" stroke="#fff" fill="none"/>
<polyline points="486,102.5 504.5,102.5 518,148" stroke="#fff" fill="none"/>
<polyline points="591,235.5 570.5,235.5 521.5,259" stroke="#fff" fill="none"/>
<polyline points="591,259.5 570.5,259.5 474,302.5" stroke="#fff" fill="none"/>
<rect x="506.5" y="363.5" width="13" height="14" stroke="#fff" fill="none"/>
<line x1="512.5" y1="363.5" x2="512.5" y2="377.5" stroke="#fff"/>
<line x1="506.5" y1="370.5" x2="582" y2="370.5" stroke="#fff"/>
<rect x="456.5" y="502.5" width="6" height="6" stroke="#fff" fill="none"/>
<polyline points="585.5,362.5 582.5,365.5 582.5,376.5 584.5,378.5" stroke="#d0d0d0" fill="none"/>
<polyline points="583,368.5 590,368.5 598,369.5" stroke="#909090" fill="none"/>
<polyline points="615.5,362.5 620.5,370.5 626.5,362.5" stroke="#c0c0c0" fill="none"/>
<line x1="620.5" y1="370.5" x2="615.5" y2="377.5" stroke="#c0c0c0"/>
<line x1="561.5" y1="299.5" x2="993.5" y2="299.5" stroke="#fff"/>
<line x1="561.5" y1="316.5" x2="993.5" y2="316.5" stroke="#fff"/>
<line x1="561.5" y1="333.5" x2="993.5" y2="333.5" stroke="#fff"/>
<line x1="561.5" y1="350.5" x2="993.5" y2="350.5" stroke="#fff"/>
<line x1="561.5" y1="366.5" x2="993.5" y2="366.5" stroke="#fff"/>
<line x1="561.5" y1="383.5" x2="993.5" y2="383.5" stroke="#fff"/>
<line x1="561.5" y1="400.5" x2="993.5" y2="400.5" stroke="#fff"/>
<line x1="561.5" y1="417.5" x2="993.5" y2="417.5" stroke="#fff"/>
<line x1="561.5" y1="434.5" x2="993.5" y2="434.5" stroke="#fff"/>
<line x1="561.5" y1="451.5" x2="993.5" y2="451.5" stroke="#fff"/>
<line x1="561.5" y1="467.5" x2="993.5" y2="467.5" stroke="#fff"/>
<line x1="561.5" y1="484.5" x2="993.5" y2="484.5" stroke="#fff"/>
<line x1="561.5" y1="501.5" x2="993.5" y2="501.5" stroke="#fff"/>
<line x1="561.5" y1="518.5" x2="993.5" y2="518.5" stroke="#fff"/>
<line x1="561.5" y1="535.5" x2="993.5" y2="535.5" stroke="#fff"/>
<line x1="561.5" y1="299.5" x2="561.5" y2="568.5" stroke="#fff"/>
<line x1="580.5" y1="299.5" x2="580.5" y2="568.5" stroke="#fff"/>
<line x1="676.5" y1="299.5" x2="676.5" y2="568.5" stroke="#fff"/>
<line x1="782.5" y1="299.5" x2="782.5" y2="568.5" stroke="#fff"/>
<line x1="801.5" y1="299.5" x2="801.5" y2="568.5" stroke="#fff"/>
<line x1="892.5" y1="299.5" x2="892.5" y2="568.5" stroke="#fff"/>
<line x1="916.5" y1="299.5" x2="916.5" y2="552.5" stroke="#fff"/>
<line x1="945.5" y1="299.5" x2="945.5" y2="568.5" stroke="#fff"/>
<line x1="561.5" y1="568.5" x2="993.5" y2="568.5" stroke="#fff"/>
<line x1="892.5" y1="552.5" x2="945.5" y2="552.5" stroke="#fff"/>
<line x1="561.5" y1="585.5" x2="753.5" y2="585.5" stroke="#fff"/>
<line x1="561.5" y1="602.5" x2="753.5" y2="602.5" stroke="#fff"/>
<line x1="561.5" y1="619.5" x2="753.5" y2="619.5" stroke="#fff"/>
<line x1="561.5" y1="636.5" x2="753.5" y2="636.5" stroke="#fff"/>
<line x1="561.5" y1="652.5" x2="753.5" y2="652.5" stroke="#fff"/>
<line x1="561.5" y1="669.5" x2="753.5" y2="669.5" stroke="#fff"/>
<line x1="561.5" y1="686.5" x2="753.5" y2="686.5" stroke="#fff"/>
<line x1="561.5" y1="299.5" x2="561.5" y2="703.5" stroke="#fff"/>
<line x1="585.5" y1="568.5" x2="585.5" y2="636.5" stroke="#fff"/>
<line x1="609.5" y1="568.5" x2="609.5" y2="636.5" stroke="#fff"/>
<line x1="647.5" y1="568.5" x2="647.5" y2="636.5" stroke="#fff"/>
<line x1="589.5" y1="636.5" x2="589.5" y2="703.5" stroke="#fff"/>
<line x1="618.5" y1="636.5" x2="618.5" y2="703.5" stroke="#fff"/>
<line x1="657.5" y1="636.5" x2="657.5" y2="703.5" stroke="#fff"/>
<line x1="686.5" y1="568.5" x2="686.5" y2="703.5" stroke="#fff"/>
<line x1="714.5" y1="568.5" x2="714.5" y2="703.5" stroke="#fff"/>
<line x1="753.5" y1="568.5" x2="753.5" y2="703.5" stroke="#fff"/>
<line x1="873.5" y1="568.5" x2="873.5" y2="703.5" stroke="#fff"/>
<line x1="753.5" y1="636.5" x2="873.5" y2="636.5" stroke="#fff"/>
<line x1="753.5" y1="660.5" x2="873.5" y2="660.5" stroke="#fff"/>
<line x1="753.5" y1="681.5" x2="993.5" y2="681.5" stroke="#fff"/>
<line x1="873.5" y1="609.5" x2="993.5" y2="609.5" stroke="#fff"/>
<line x1="873.5" y1="652.5" x2="993.5" y2="652.5" stroke="#fff"/>
<line x1="815.5" y1="636.5" x2="815.5" y2="681.5" stroke="#fff"/>
<line x1="844.5" y1="636.5" x2="844.5" y2="681.5" stroke="#fff"/>
<line x1="769.5" y1="660.5" x2="769.5" y2="681.5" stroke="#fff"/>
<line x1="784.5" y1="660.5" x2="784.5" y2="681.5" stroke="#fff"/>
<line x1="800.5" y1="660.5" x2="800.5" y2="681.5" stroke="#fff"/>
</g>
<g opacity="0.999">
<text x="183.5" y="341" font-size="9.5" fill="#0f0" stroke="#0f0" font-weight="bold" textLength="22" lengthAdjust="spacingAndGlyphs" style="stroke-width:.9px">ø12H7/n6</text>
<text x="84" y="274.5" font-size="14" fill="#fff" stroke="#fff" font-weight="bold" textLength="5" lengthAdjust="spacingAndGlyphs">2</text>
<text x="84" y="309.5" font-size="14" fill="#fff" stroke="#fff" font-weight="bold" textLength="4.5" lengthAdjust="spacingAndGlyphs">1</text>
<text x="194.5" y="429" font-size="8.5" fill="#0f0" stroke="#0f0" font-weight="bold" textLength="9" lengthAdjust="spacingAndGlyphs" style="stroke-width:.9px">135</text>
<text x="0" y="0" font-size="8.5" fill="#0f0" stroke="#0f0" font-weight="bold" textLength="9" lengthAdjust="spacingAndGlyphs" style="stroke-width:.9px" transform="translate(290,557) rotate(-90)">200</text>
<text x="219" y="450" font-size="19" fill="#0f0" stroke="#0f0" font-weight="bold" textLength="5.5" lengthAdjust="spacingAndGlyphs">A</text>
<text x="219" y="664" font-size="18" fill="#0f0" stroke="#0f0" font-weight="bold" textLength="5.5" lengthAdjust="spacingAndGlyphs">A</text>
<text x="425" y="73" font-size="19" fill="#0f0" stroke="#0f0" font-weight="bold" textLength="18.5" lengthAdjust="spacingAndGlyphs">A-A</text>
<text x="431" y="314" font-size="9.5" fill="#0f0" stroke="#0f0" font-weight="bold" textLength="22.5" lengthAdjust="spacingAndGlyphs" style="stroke-width:.9px">ø35H7/n7</text>
<text x="431" y="340" font-size="9.5" fill="#0f0" stroke="#0f0" font-weight="bold" textLength="22.5" lengthAdjust="spacingAndGlyphs" style="stroke-width:.9px">ø50H7/n6</text>
<text x="299" y="110.5" font-size="14" fill="#fff" stroke="#fff" font-weight="bold" textLength="5" lengthAdjust="spacingAndGlyphs">8</text>
<text x="299" y="163.5" font-size="14" fill="#fff" stroke="#fff" font-weight="bold" textLength="5" lengthAdjust="spacingAndGlyphs">7</text>
<text x="299" y="234.5" font-size="14" fill="#fff" stroke="#fff" font-weight="bold" textLength="5" lengthAdjust="spacingAndGlyphs">6</text>
<text x="299" y="255.5" font-size="14" fill="#fff" stroke="#fff" font-weight="bold" textLength="5" lengthAdjust="spacingAndGlyphs">5</text>
<text x="299" y="271.5" font-size="14" fill="#fff" stroke="#fff" font-weight="bold" textLength="5" lengthAdjust="spacingAndGlyphs">4</text>
<text x="299" y="290.5" font-size="14" fill="#fff" stroke="#fff" font-weight="bold" textLength="5" lengthAdjust="spacingAndGlyphs">3</text>
<text x="390" y="98.5" font-size="14" fill="#fff" stroke="#fff" font-weight="bold" textLength="5" lengthAdjust="spacingAndGlyphs">9</text>
<text x="415.5" y="98.5" font-size="14" fill="#fff" stroke="#fff" font-weight="bold" textLength="9.5" lengthAdjust="spacingAndGlyphs">10</text>
<text x="451.5" y="98.5" font-size="14" fill="#fff" stroke="#fff" font-weight="bold" textLength="9.5" lengthAdjust="spacingAndGlyphs">11</text>
<text x="491" y="98.5" font-size="14" fill="#fff" stroke="#fff" font-weight="bold" textLength="9.5" lengthAdjust="spacingAndGlyphs">12</text>
<text x="576" y="231.5" font-size="14" fill="#fff" stroke="#fff" font-weight="bold" textLength="9.5" lengthAdjust="spacingAndGlyphs">13</text>
<text x="576" y="255.5" font-size="14" fill="#fff" stroke="#fff" font-weight="bold" textLength="9.5" lengthAdjust="spacingAndGlyphs">14</text>
<text x="745" y="148.5" font-size="17" fill="#0f0" stroke="#0f0" font-weight="bold" textLength="46" lengthAdjust="spacingAndGlyphs" style="stroke-width:.7px">技术要求</text>
<text x="659.5" y="173.5" font-size="11.5" fill="#0f0" stroke="#0f0" font-weight="bold" textLength="223.5" lengthAdjust="spacingAndGlyphs" style="stroke-width:.7px">1.进入装配的零件及部件（包括外购件、外协件），均必须具有</text>
<text x="659.5" y="189.7" font-size="11.5" fill="#0f0" stroke="#0f0" font-weight="bold" textLength="121" lengthAdjust="spacingAndGlyphs" style="stroke-width:.7px">检验部门的合格证方能进行装配。</text>
<text x="659.5" y="205.9" font-size="11.5" fill="#0f0" stroke="#0f0" font-weight="bold" textLength="223.5" lengthAdjust="spacingAndGlyphs" style="stroke-width:.7px">2.规定拧紧力矩要求的紧固件，必须采用力矩扳手，并按规定的</text>
<text x="659.5" y="222.1" font-size="11.5" fill="#0f0" stroke="#0f0" font-weight="bold" textLength="56.5" lengthAdjust="spacingAndGlyphs" style="stroke-width:.7px">拧紧力矩紧固。</text>
<text x="659.5" y="238.3" font-size="11.5" fill="#0f0" stroke="#0f0" font-weight="bold" textLength="167.5" lengthAdjust="spacingAndGlyphs" style="stroke-width:.7px">3.装配过程中零件不允许磕、碰、划伤和锈蚀。</text>
<text x="564.5" y="311.9" font-size="12" fill="#fff" stroke="#fff" font-weight="bold" textLength="8.1" lengthAdjust="spacingAndGlyphs">14</text>
<text x="680" y="311.9" font-size="12" fill="#fff" stroke="#fff" font-weight="bold" textLength="16" lengthAdjust="spacingAndGlyphs">衬套</text>
<text x="786" y="311.9" font-size="12" fill="#fff" stroke="#fff" font-weight="bold" textLength="4" lengthAdjust="spacingAndGlyphs">1</text>
<text x="805.5" y="311.9" font-size="12" fill="#fff" stroke="#fff" font-weight="bold" textLength="8.1" lengthAdjust="spacingAndGlyphs">45</text>
<text x="564.5" y="328.9" font-size="12" fill="#fff" stroke="#fff" font-weight="bold" textLength="8.1" lengthAdjust="spacingAndGlyphs">13</text>
<text x="680" y="328.9" font-size="12" fill="#fff" stroke="#fff" font-weight="bold" textLength="28.15" lengthAdjust="spacingAndGlyphs">螺柱M10</text>
<text x="786" y="328.9" font-size="12" fill="#fff" stroke="#fff" font-weight="bold" textLength="4" lengthAdjust="spacingAndGlyphs">1</text>
<text x="805.5" y="328.9" font-size="12" fill="#fff" stroke="#fff" font-weight="bold" textLength="8.1" lengthAdjust="spacingAndGlyphs">45</text>
<text x="564.5" y="345.9" font-size="12" fill="#fff" stroke="#fff" font-weight="bold" textLength="8.1" lengthAdjust="spacingAndGlyphs">12</text>
<text x="584.5" y="345.9" font-size="12" fill="#fff" stroke="#fff" font-weight="bold" textLength="52.1" lengthAdjust="spacingAndGlyphs">GB/T89.2-1999</text>
<text x="680" y="345.9" font-size="12" fill="#fff" stroke="#fff" font-weight="bold" textLength="44.25" lengthAdjust="spacingAndGlyphs">圆柱销ø6x32</text>
<text x="786" y="345.9" font-size="12" fill="#fff" stroke="#fff" font-weight="bold" textLength="4" lengthAdjust="spacingAndGlyphs">1</text>
<text x="805.5" y="345.9" font-size="12" fill="#fff" stroke="#fff" font-weight="bold" textLength="8.1" lengthAdjust="spacingAndGlyphs">T8</text>
<text x="564.5" y="362.9" font-size="12" fill="#fff" stroke="#fff" font-weight="bold" textLength="8.1" lengthAdjust="spacingAndGlyphs">11</text>
<text x="584.5" y="362.9" font-size="12" fill="#fff" stroke="#fff" font-weight="bold" textLength="64.25" lengthAdjust="spacingAndGlyphs">JB/T8010.14-1999</text>
<text x="680" y="362.9" font-size="12" fill="#fff" stroke="#fff" font-weight="bold" textLength="76.4" lengthAdjust="spacingAndGlyphs">B型铰链压板 B12×180</text>
<text x="786" y="362.9" font-size="12" fill="#fff" stroke="#fff" font-weight="bold" textLength="4" lengthAdjust="spacingAndGlyphs">1</text>
<text x="805.5" y="362.9" font-size="12" fill="#fff" stroke="#fff" font-weight="bold" textLength="8.1" lengthAdjust="spacingAndGlyphs">45</text>
<text x="564.5" y="378.9" font-size="12" fill="#fff" stroke="#fff" font-weight="bold" textLength="8.1" lengthAdjust="spacingAndGlyphs">10</text>
<text x="584.5" y="378.9" font-size="12" fill="#fff" stroke="#fff" font-weight="bold" textLength="52.1" lengthAdjust="spacingAndGlyphs">GB/T89.2-1999</text>
<text x="680" y="378.9" font-size="12" fill="#fff" stroke="#fff" font-weight="bold" textLength="44.25" lengthAdjust="spacingAndGlyphs">圆柱销ø6x32</text>
<text x="786" y="378.9" font-size="12" fill="#fff" stroke="#fff" font-weight="bold" textLength="4" lengthAdjust="spacingAndGlyphs">1</text>
<text x="805.5" y="378.9" font-size="12" fill="#fff" stroke="#fff" font-weight="bold" textLength="8.1" lengthAdjust="spacingAndGlyphs">T8</text>
<text x="564.5" y="395.9" font-size="12" fill="#fff" stroke="#fff" font-weight="bold" textLength="4.05" lengthAdjust="spacingAndGlyphs">9</text>
<text x="584.5" y="395.9" font-size="12" fill="#fff" stroke="#fff" font-weight="bold" textLength="60.2" lengthAdjust="spacingAndGlyphs">JB/T8009.4-1999</text>
<text x="680" y="395.9" font-size="12" fill="#fff" stroke="#fff" font-weight="bold" textLength="32" lengthAdjust="spacingAndGlyphs">弧形压块</text>
<text x="786" y="395.9" font-size="12" fill="#fff" stroke="#fff" font-weight="bold" textLength="4" lengthAdjust="spacingAndGlyphs">1</text>
<text x="805.5" y="395.9" font-size="12" fill="#fff" stroke="#fff" font-weight="bold" textLength="8.1" lengthAdjust="spacingAndGlyphs">45</text>
<text x="564.5" y="412.9" font-size="12" fill="#fff" stroke="#fff" font-weight="bold" textLength="4.05" lengthAdjust="spacingAndGlyphs">8</text>
<text x="584.5" y="412.9" font-size="12" fill="#fff" stroke="#fff" font-weight="bold" textLength="60.2" lengthAdjust="spacingAndGlyphs">JB/T8004.1-1999</text>
<text x="680" y="412.9" font-size="12" fill="#fff" stroke="#fff" font-weight="bold" textLength="64.15" lengthAdjust="spacingAndGlyphs">带肩六角螺母 M10</text>
<text x="786" y="412.9" font-size="12" fill="#fff" stroke="#fff" font-weight="bold" textLength="4" lengthAdjust="spacingAndGlyphs">1</text>
<text x="805.5" y="412.9" font-size="12" fill="#fff" stroke="#fff" font-weight="bold" textLength="8.1" lengthAdjust="spacingAndGlyphs">45</text>
<text x="564.5" y="429.9" font-size="12" fill="#fff" stroke="#fff" font-weight="bold" textLength="4.05" lengthAdjust="spacingAndGlyphs">7</text>
<text x="680" y="429.9" font-size="12" fill="#fff" stroke="#fff" font-weight="bold" textLength="44.15" lengthAdjust="spacingAndGlyphs">活动螺柱M10</text>
<text x="786" y="429.9" font-size="12" fill="#fff" stroke="#fff" font-weight="bold" textLength="4" lengthAdjust="spacingAndGlyphs">1</text>
<text x="805.5" y="429.9" font-size="12" fill="#fff" stroke="#fff" font-weight="bold" textLength="8.1" lengthAdjust="spacingAndGlyphs">45</text>
<text x="564.5" y="446.9" font-size="12" fill="#fff" stroke="#fff" font-weight="bold" textLength="4.05" lengthAdjust="spacingAndGlyphs">6</text>
<text x="584.5" y="446.9" font-size="12" fill="#fff" stroke="#fff" font-weight="bold" textLength="52.1" lengthAdjust="spacingAndGlyphs">GB/T89.2-1999</text>
<text x="680" y="446.9" font-size="12" fill="#fff" stroke="#fff" font-weight="bold" textLength="44.25" lengthAdjust="spacingAndGlyphs">圆柱销ø6x30</text>
<text x="786" y="446.9" font-size="12" fill="#fff" stroke="#fff" font-weight="bold" textLength="4" lengthAdjust="spacingAndGlyphs">1</text>
<text x="805.5" y="446.9" font-size="12" fill="#fff" stroke="#fff" font-weight="bold" textLength="8.1" lengthAdjust="spacingAndGlyphs">T8</text>
<text x="564.5" y="463.9" font-size="12" fill="#fff" stroke="#fff" font-weight="bold" textLength="4.05" lengthAdjust="spacingAndGlyphs">5</text>
<text x="584.5" y="463.9" font-size="12" fill="#fff" stroke="#fff" font-weight="bold" textLength="60.2" lengthAdjust="spacingAndGlyphs">JB/T8023.2-1999</text>
<text x="680" y="463.9" font-size="12" fill="#fff" stroke="#fff" font-weight="bold" textLength="16" lengthAdjust="spacingAndGlyphs">支脚</text>
<text x="786" y="463.9" font-size="12" fill="#fff" stroke="#fff" font-weight="bold" textLength="4" lengthAdjust="spacingAndGlyphs">1</text>
<text x="805.5" y="463.9" font-size="12" fill="#fff" stroke="#fff" font-weight="bold" textLength="8.1" lengthAdjust="spacingAndGlyphs">45</text>
<text x="564.5" y="479.9" font-size="12" fill="#fff" stroke="#fff" font-weight="bold" textLength="4.05" lengthAdjust="spacingAndGlyphs">4</text>
<text x="584.5" y="479.9" font-size="12" fill="#fff" stroke="#fff" font-weight="bold" textLength="44.55" lengthAdjust="spacingAndGlyphs">GB/T41-2000</text>
<text x="680" y="479.9" font-size="12" fill="#fff" stroke="#fff" font-weight="bold" textLength="64.25" lengthAdjust="spacingAndGlyphs">六角螺母-C级 M10</text>
<text x="786" y="479.9" font-size="12" fill="#fff" stroke="#fff" font-weight="bold" textLength="4" lengthAdjust="spacingAndGlyphs">4</text>
<text x="805.5" y="479.9" font-size="12" fill="#fff" stroke="#fff" font-weight="bold" textLength="8.1" lengthAdjust="spacingAndGlyphs">45</text>
<text x="564.5" y="496.9" font-size="12" fill="#fff" stroke="#fff" font-weight="bold" textLength="4.05" lengthAdjust="spacingAndGlyphs">3</text>
<text x="584.5" y="496.9" font-size="12" fill="#fff" stroke="#fff" font-weight="bold" textLength="60.2" lengthAdjust="spacingAndGlyphs">JB/T8008.3-1999</text>
<text x="680" y="496.9" font-size="12" fill="#fff" stroke="#fff" font-weight="bold" textLength="68.1" lengthAdjust="spacingAndGlyphs">十字垫圈用垫圈 10</text>
<text x="786" y="496.9" font-size="12" fill="#fff" stroke="#fff" font-weight="bold" textLength="4" lengthAdjust="spacingAndGlyphs">2</text>
<text x="805.5" y="496.9" font-size="12" fill="#fff" stroke="#fff" font-weight="bold" textLength="8.1" lengthAdjust="spacingAndGlyphs">45</text>
<text x="564.5" y="513.9" font-size="12" fill="#fff" stroke="#fff" font-weight="bold" textLength="4.05" lengthAdjust="spacingAndGlyphs">2</text>
<text x="584.5" y="513.9" font-size="12" fill="#fff" stroke="#fff" font-weight="bold" textLength="60.2" lengthAdjust="spacingAndGlyphs">JB/T8014.2-1999</text>
<text x="680" y="513.9" font-size="12" fill="#fff" stroke="#fff" font-weight="bold" textLength="96.45" lengthAdjust="spacingAndGlyphs">B型固定式定位销 B12f7×16</text>
<text x="786" y="513.9" font-size="12" fill="#fff" stroke="#fff" font-weight="bold" textLength="4" lengthAdjust="spacingAndGlyphs">1</text>
<text x="805.5" y="513.9" font-size="12" fill="#fff" stroke="#fff" font-weight="bold" textLength="8.1" lengthAdjust="spacingAndGlyphs">T8</text>
<text x="564.5" y="530.9" font-size="12" fill="#fff" stroke="#fff" font-weight="bold" textLength="4.05" lengthAdjust="spacingAndGlyphs">1</text>
<text x="680" y="530.9" font-size="12" fill="#fff" stroke="#fff" font-weight="bold" textLength="24" lengthAdjust="spacingAndGlyphs">夹具体</text>
<text x="786" y="530.9" font-size="12" fill="#fff" stroke="#fff" font-weight="bold" textLength="4" lengthAdjust="spacingAndGlyphs">1</text>
<text x="805.5" y="530.9" font-size="12" fill="#fff" stroke="#fff" font-weight="bold" textLength="20.25" lengthAdjust="spacingAndGlyphs">HT200</text>
<text x="562.5" y="558.5" font-size="15" fill="#fff" stroke="#fff" font-weight="bold" textLength="17" lengthAdjust="spacingAndGlyphs">序号</text>
<text x="617" y="558.5" font-size="15" fill="#fff" stroke="#fff" font-weight="bold" textLength="23" lengthAdjust="spacingAndGlyphs">代号</text>
<text x="718" y="558.5" font-size="15" fill="#fff" stroke="#fff" font-weight="bold" textLength="23" lengthAdjust="spacingAndGlyphs">名称</text>
<text x="783.5" y="558.5" font-size="15" fill="#fff" stroke="#fff" font-weight="bold" textLength="17.5" lengthAdjust="spacingAndGlyphs">数量</text>
<text x="836" y="558.5" font-size="15" fill="#fff" stroke="#fff" font-weight="bold" textLength="23" lengthAdjust="spacingAndGlyphs">材料</text>
<text x="959" y="558.5" font-size="15" fill="#fff" stroke="#fff" font-weight="bold" textLength="22.5" lengthAdjust="spacingAndGlyphs">备注</text>
<text x="897" y="548" font-size="10" fill="#fff" stroke="#fff" font-weight="bold" textLength="15.5" lengthAdjust="spacingAndGlyphs">单件</text>
<text x="923.5" y="548" font-size="10" fill="#fff" stroke="#fff" font-weight="bold" textLength="15" lengthAdjust="spacingAndGlyphs">总计</text>
<text x="911.5" y="565" font-size="10" fill="#fff" stroke="#fff" font-weight="bold" textLength="15" lengthAdjust="spacingAndGlyphs">重量</text>
<text x="565" y="633.5" font-size="11" fill="#0f0" stroke="#0f0" font-weight="bold" textLength="16" lengthAdjust="spacingAndGlyphs">标记</text>
<text x="588.5" y="633.5" font-size="11" fill="#0f0" stroke="#0f0" font-weight="bold" textLength="16" lengthAdjust="spacingAndGlyphs">处数</text>
<text x="620" y="633.5" font-size="11" fill="#0f0" stroke="#0f0" font-weight="bold" textLength="16" lengthAdjust="spacingAndGlyphs">分区</text>
<text x="648.5" y="633.5" font-size="11" fill="#0f0" stroke="#0f0" font-weight="bold" textLength="37" lengthAdjust="spacingAndGlyphs">更改文件号</text>
<text x="693" y="633.5" font-size="11" fill="#0f0" stroke="#0f0" font-weight="bold" textLength="15.5" lengthAdjust="spacingAndGlyphs">签名</text>
<text x="715.5" y="633.5" font-size="11" fill="#0f0" stroke="#0f0" font-weight="bold" textLength="37.5" lengthAdjust="spacingAndGlyphs">年、月、日</text>
<text x="567.5" y="650" font-size="11" fill="#0f0" stroke="#0f0" font-weight="bold" textLength="16.5" lengthAdjust="spacingAndGlyphs">设计</text>
<text x="659.5" y="650" font-size="11" fill="#0f0" stroke="#0f0" font-weight="bold" textLength="24" lengthAdjust="spacingAndGlyphs">标准化</text>
<text x="567.5" y="684" font-size="11" fill="#0f0" stroke="#0f0" font-weight="bold" textLength="16.5" lengthAdjust="spacingAndGlyphs">审核</text>
<text x="567.5" y="700.5" font-size="11" fill="#0f0" stroke="#0f0" font-weight="bold" textLength="16.5" lengthAdjust="spacingAndGlyphs">工艺</text>
<text x="663.5" y="700.5" font-size="11" fill="#0f0" stroke="#0f0" font-weight="bold" textLength="16.5" lengthAdjust="spacingAndGlyphs">批准</text>
<text x="769" y="654" font-size="11" fill="#0f0" stroke="#0f0" font-weight="bold" textLength="32" lengthAdjust="spacingAndGlyphs">阶段标记</text>
<text x="822" y="654" font-size="11" fill="#0f0" stroke="#0f0" font-weight="bold" textLength="16.5" lengthAdjust="spacingAndGlyphs">重量</text>
<text x="851.5" y="654" font-size="11" fill="#0f0" stroke="#0f0" font-weight="bold" textLength="15" lengthAdjust="spacingAndGlyphs">比例</text>
<text x="849.5" y="676" font-size="10" fill="#0f0" stroke="#0f0" font-weight="bold" textLength="19.5" lengthAdjust="spacingAndGlyphs">1:2.5</text>
<text x="760.5" y="698.5" font-size="11" fill="#0f0" stroke="#0f0" font-weight="bold" textLength="9" lengthAdjust="spacingAndGlyphs">共</text>
<text x="795" y="698.5" font-size="11" fill="#0f0" stroke="#0f0" font-weight="bold" textLength="8" lengthAdjust="spacingAndGlyphs">张</text>
<text x="824.5" y="698.5" font-size="11" fill="#0f0" stroke="#0f0" font-weight="bold" textLength="8" lengthAdjust="spacingAndGlyphs">第</text>
<text x="857.5" y="698.5" font-size="11" fill="#0f0" stroke="#0f0" font-weight="bold" textLength="8.5" lengthAdjust="spacingAndGlyphs">张</text>
</g>
</svg>
</body>
</html>
